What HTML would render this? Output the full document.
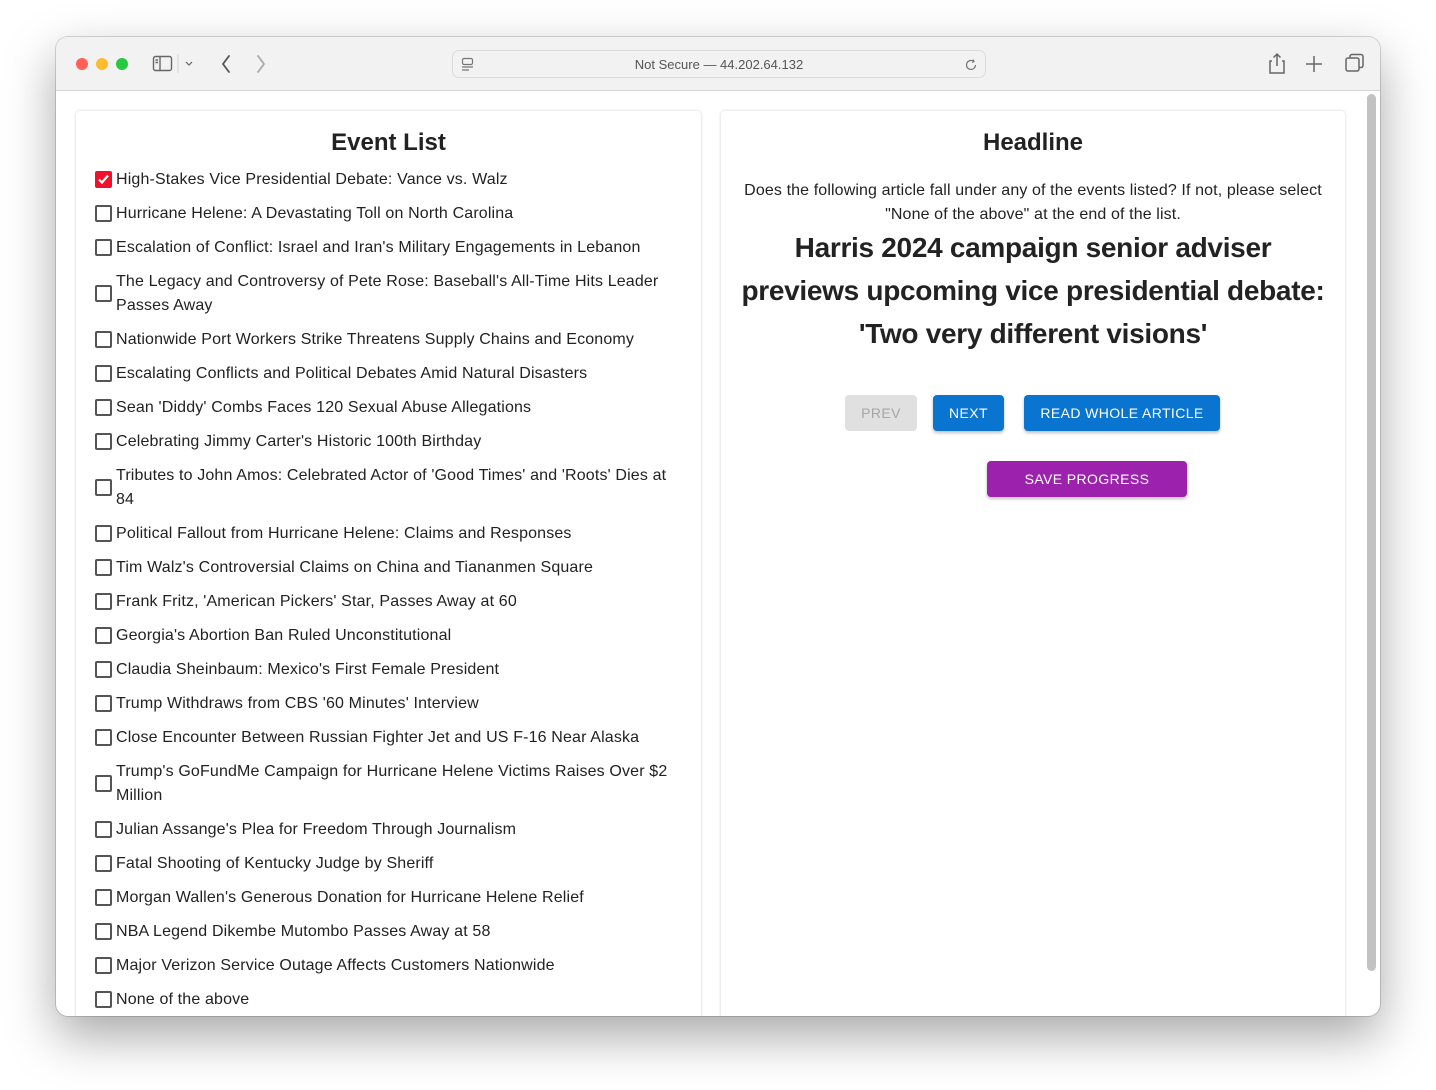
<!DOCTYPE html>
<html><head><meta charset="utf-8"><style>
*{box-sizing:border-box;margin:0;padding:0}
body{width:1436px;height:1090px;background:#fff;font-family:"Liberation Sans",Arial,sans-serif;position:relative;overflow:hidden}
.win{position:absolute;left:56px;top:37px;width:1324px;height:979px;border-radius:12px;overflow:hidden;background:#fff;box-shadow:0 20px 50px rgba(0,0,0,.35),0 0 0 1px rgba(0,0,0,.15)}
.bar{position:absolute;left:0;top:0;width:100%;height:54px;background:#f2f2f2;border-bottom:1px solid #d6d6d6}
.dot{position:absolute;top:21px;width:12px;height:12px;border-radius:50%}
.url{position:absolute;left:396px;top:13px;width:534px;height:28px;border:1px solid #dcdcdc;border-radius:7px;background:#f2f2f2;font-size:13px;color:#555;text-align:center;line-height:27px}
.card{position:absolute;top:74px;height:920px;background:#fff;box-shadow:0 0 3px rgba(0,0,0,.18);border-radius:4px}
h2{font-size:24px;font-weight:bold;color:#222;text-align:center;position:absolute;left:0;width:100%;top:18px}
.list{position:absolute;left:19px;top:57px;width:580px}
.it{display:flex;align-items:center;margin-bottom:10px;font-size:16px;line-height:24px;color:#222;letter-spacing:.15px}
.cb{flex:none;width:17px;height:17px;border:2px solid #555;border-radius:2px;margin-right:4px;margin-top:-2px}
.cb.on{background:#f0122d;border-color:#f0122d;position:relative}
.btn{position:absolute;height:36px;border-radius:4px;color:#fff;font-size:14px;letter-spacing:.4px;text-align:center;line-height:36px;box-shadow:0 2px 3px rgba(0,0,0,.25)}
</style></head><body>
<div class="win">
<div class="bar">
<div class="dot" style="left:20px;background:#fe5f57"></div>
<div class="dot" style="left:40px;background:#febc2e"></div>
<div class="dot" style="left:60px;background:#28c840"></div>
<svg style="position:absolute;left:96px;top:17px" width="60" height="20" viewBox="0 0 60 20" fill="none" stroke="#666" stroke-width="1.4"><rect x="1.5" y="2.5" width="18" height="14" rx="2"/><line x1="8" y1="3" x2="8" y2="16"/><line x1="3.5" y1="6" x2="6" y2="6"/><line x1="3.5" y1="8.5" x2="6" y2="8.5"/><line x1="26" y1="0" x2="26" y2="19" stroke="#ddd"/><path d="M34 8l3 3 3-3" stroke-width="1.2"/></svg>
<svg style="position:absolute;left:162px;top:16px" width="50" height="22" viewBox="0 0 50 22" fill="none" stroke-width="1.8" stroke-linecap="round"><path d="M11 3l-6 8 6 8" stroke="#555"/><path d="M40 3l6 8-6 8" stroke="#aaa"/></svg>
<div class="url">Not Secure — 44.202.64.132
<svg style="position:absolute;left:8px;top:6px" width="14" height="16" viewBox="0 0 14 16" fill="none" stroke="#777" stroke-width="1.2"><rect x="1.5" y="1.5" width="10" height="6" rx="1.5"/><line x1="1" y1="10" x2="12" y2="10"/><line x1="1" y1="13" x2="8" y2="13"/></svg>
<svg style="position:absolute;right:6px;top:6px" width="16" height="16" viewBox="0 0 16 16" fill="none" stroke="#777" stroke-width="1.2"><path d="M12.5 8a4.5 4.5 0 1 1-2-3.8"/><path d="M10 2.5l1 2-2 .8"/></svg>
</div>
<svg style="position:absolute;left:1210px;top:14px" width="110" height="26" viewBox="0 0 110 26" fill="none" stroke="#666" stroke-width="1.5"><path d="M6 10H4v12h14V10h-2M11 3v12M7.5 6.5L11 3l3.5 3.5"/><path d="M48 5v16M40 13h16"/><rect x="80" y="7" width="13" height="13" rx="2"/><path d="M84 7V5.5a2 2 0 0 1 2-2h9a2 2 0 0 1 2 2v9a2 2 0 0 1-2 2h-2"/></svg>
</div>
<div style="position:absolute;left:1311px;top:57px;width:9px;height:877px;border-radius:5px;background:#c2c2c2"></div>

<div class="card" style="left:20px;width:625px">
<h2>Event List</h2>
<div class="list">
<div class="it"><span class="cb on"><svg style="position:absolute;left:0;top:0" width="13" height="13" viewBox="0 0 13 13" fill="none" stroke="#fff" stroke-width="2.2"><path d="M2 6.5l3 3 6-7"/></svg></span>High-Stakes Vice Presidential Debate: Vance vs. Walz</div>
<div class="it"><span class="cb"></span>Hurricane Helene: A Devastating Toll on North Carolina</div>
<div class="it"><span class="cb"></span>Escalation of Conflict: Israel and Iran's Military Engagements in Lebanon</div>
<div class="it"><span class="cb"></span>The Legacy and Controversy of Pete Rose: Baseball's All-Time Hits Leader Passes Away</div>
<div class="it"><span class="cb"></span>Nationwide Port Workers Strike Threatens Supply Chains and Economy</div>
<div class="it"><span class="cb"></span>Escalating Conflicts and Political Debates Amid Natural Disasters</div>
<div class="it"><span class="cb"></span>Sean 'Diddy' Combs Faces 120 Sexual Abuse Allegations</div>
<div class="it"><span class="cb"></span>Celebrating Jimmy Carter's Historic 100th Birthday</div>
<div class="it"><span class="cb"></span>Tributes to John Amos: Celebrated Actor of 'Good Times' and 'Roots' Dies at 84</div>
<div class="it"><span class="cb"></span>Political Fallout from Hurricane Helene: Claims and Responses</div>
<div class="it"><span class="cb"></span>Tim Walz's Controversial Claims on China and Tiananmen Square</div>
<div class="it"><span class="cb"></span>Frank Fritz, 'American Pickers' Star, Passes Away at 60</div>
<div class="it"><span class="cb"></span>Georgia's Abortion Ban Ruled Unconstitutional</div>
<div class="it"><span class="cb"></span>Claudia Sheinbaum: Mexico's First Female President</div>
<div class="it"><span class="cb"></span>Trump Withdraws from CBS '60 Minutes' Interview</div>
<div class="it"><span class="cb"></span>Close Encounter Between Russian Fighter Jet and US F-16 Near Alaska</div>
<div class="it"><span class="cb"></span>Trump's GoFundMe Campaign for Hurricane Helene Victims Raises Over $2 Million</div>
<div class="it"><span class="cb"></span>Julian Assange's Plea for Freedom Through Journalism</div>
<div class="it"><span class="cb"></span>Fatal Shooting of Kentucky Judge by Sheriff</div>
<div class="it"><span class="cb"></span>Morgan Wallen's Generous Donation for Hurricane Helene Relief</div>
<div class="it"><span class="cb"></span>NBA Legend Dikembe Mutombo Passes Away at 58</div>
<div class="it"><span class="cb"></span>Major Verizon Service Outage Affects Customers Nationwide</div>
<div class="it"><span class="cb"></span>None of the above</div>
</div>
</div>

<div class="card" style="left:665px;width:624px">
<h2>Headline</h2>
<div style="position:absolute;left:0;width:624px;top:68px;text-align:center;font-size:16px;line-height:24px;color:#222;letter-spacing:.12px;white-space:nowrap">Does the following article fall under any of the events listed? If not, please select<br>"None of the above" at the end of the list.</div>
<div style="position:absolute;left:0;width:624px;top:115px;text-align:center;font-size:28px;font-weight:bold;line-height:43px;color:#222;letter-spacing:-0.3px;white-space:nowrap">Harris 2024 campaign senior adviser<br>previews upcoming vice presidential debate:<br>'Two very different visions'</div>
</div>
<div class="btn" style="left:789px;top:358px;width:72px;background:#e0e0e0;color:#a6a6a6;box-shadow:none">PREV</div>
<div class="btn" style="left:877px;top:358px;width:71px;background:#0a75d0">NEXT</div>
<div class="btn" style="left:968px;top:358px;width:196px;background:#0a75d0">READ WHOLE ARTICLE</div>
<div class="btn" style="left:931px;top:424px;width:200px;background:#9c22ae">SAVE PROGRESS</div>
</div>
</body></html>
